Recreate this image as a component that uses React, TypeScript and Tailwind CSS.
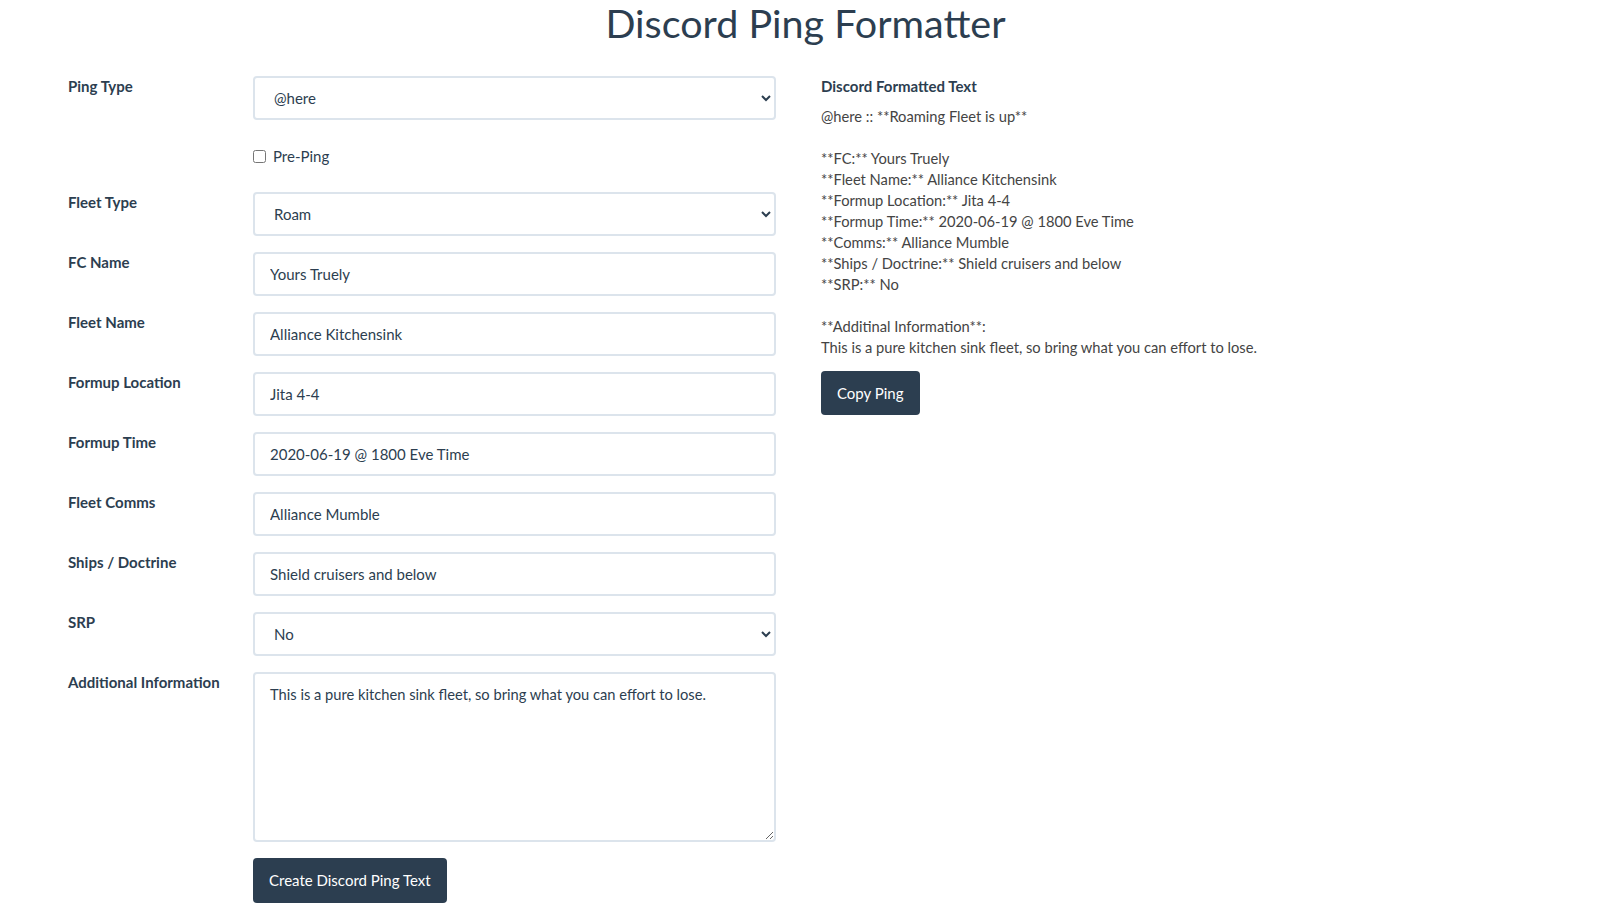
import React, { useState } from 'react';

const field =
  'w-full h-[44px] rounded-[4px] border-2 border-[#dce4ec] bg-white px-[15px] text-[15px] text-[#2c3e50] outline-none';

function Row({ label, children }: { label: string; children: React.ReactNode }) {
  return (
    <div className="flex items-start mb-[16px]">
      <label className="w-[185px] shrink-0 text-[15px] leading-[21px] font-bold text-[#2c3e50]">{label}</label>
      <div className="flex-1">{children}</div>
    </div>
  );
}

export default function App() {
  const [pingType, setPingType] = useState('@here');
  const [prePing, setPrePing] = useState(false);
  const [fleetType, setFleetType] = useState('Roam');
  const [fc, setFc] = useState('Yours Truely');
  const [fleetName, setFleetName] = useState('Alliance Kitchensink');
  const [location, setLocation] = useState('Jita 4-4');
  const [time, setTime] = useState('2020-06-19 @ 1800 Eve Time');
  const [comms, setComms] = useState('Alliance Mumble');
  const [ships, setShips] = useState('Shield cruisers and below');
  const [srp, setSrp] = useState('No');
  const [info, setInfo] = useState('This is a pure kitchen sink fleet, so bring what you can effort to lose.');

  const output = [
    `${pingType} :: **Roaming Fleet is up**`,
    '',
    `**FC:** ${fc}`,
    `**Fleet Name:** ${fleetName}`,
    `**Formup Location:** ${location}`,
    `**Formup Time:** ${time}`,
    `**Comms:** ${comms}`,
    `**Ships / Doctrine:** ${ships}`,
    `**SRP:** ${srp}`,
    '',
    '**Additinal Information**:',
    info,
  ];

  return (
    <div className="min-h-screen bg-white font-['Lato','Liberation_Sans',sans-serif] text-[#2c3e50]">
      <h1 className="text-center pl-[8px] text-[39.5px] leading-[46px] font-normal mb-[30px]">Discord Ping Formatter</h1>

      <div className="flex">
        {/* Form */}
        <div className="w-[801px] shrink-0 pl-[68px] pr-[25px]">
          <Row label="Ping Type">
            <select className={field + ' pl-[15px] pr-[4px]'} value={pingType} onChange={(e) => setPingType(e.target.value)}>
              <option>@here</option>
              <option>@everyone</option>
              <option>@fleet</option>
            </select>
          </Row>

          <div className="flex items-center h-[40px] mb-[16px] pl-[185px]">
            <input
              type="checkbox"
              checked={prePing}
              onChange={(e) => setPrePing(e.target.checked)}
              className="w-[13px] h-[13px] m-0"
            />
            <span className="ml-[7px] text-[15px] text-[#2c3e50]">Pre-Ping</span>
          </div>

          <Row label="Fleet Type">
            <select className={field + ' pl-[15px] pr-[4px]'} value={fleetType} onChange={(e) => setFleetType(e.target.value)}>
              <option>Roam</option>
              <option>Stratop</option>
              <option>CTA</option>
            </select>
          </Row>
          <Row label="FC Name">
            <input className={field} value={fc} onChange={(e) => setFc(e.target.value)} />
          </Row>
          <Row label="Fleet Name">
            <input className={field} value={fleetName} onChange={(e) => setFleetName(e.target.value)} />
          </Row>
          <Row label="Formup Location">
            <input className={field} value={location} onChange={(e) => setLocation(e.target.value)} />
          </Row>
          <Row label="Formup Time">
            <input className={field} value={time} onChange={(e) => setTime(e.target.value)} />
          </Row>
          <Row label="Fleet Comms">
            <input className={field} value={comms} onChange={(e) => setComms(e.target.value)} />
          </Row>
          <Row label="Ships / Doctrine">
            <input className={field} value={ships} onChange={(e) => setShips(e.target.value)} />
          </Row>
          <Row label="SRP">
            <select className={field + ' pl-[15px] pr-[4px]'} value={srp} onChange={(e) => setSrp(e.target.value)}>
              <option>No</option>
              <option>Yes</option>
            </select>
          </Row>
          <Row label="Additional Information">
            <textarea
              className="block w-full h-[170px] rounded-[4px] border-2 border-[#dce4ec] bg-white px-[15px] py-[10px] text-[14.7px] leading-[21px] text-[#2c3e50] outline-none"
              value={info}
              onChange={(e) => setInfo(e.target.value)}
            />
          </Row>
          <div className="pl-[185px]">
            <button className="h-[45px] px-[16px] rounded-[4px] bg-[#2c3e50] text-white text-[15px]">Create Discord Ping Text</button>
          </div>
        </div>

        {/* Output */}
        <div className="flex-1 pl-[20px]">
          <h5 className="text-[15px] leading-[21px] font-bold text-[#2c3e50] mb-[9px]">Discord Formatted Text</h5>
          <div className="text-[14.7px] leading-[21px] text-[#444] whitespace-pre-wrap">
            {output.map((l, i) => (
              <div key={i} className="min-h-[21px]">{l}</div>
            ))}
          </div>
          <button className="mt-[13px] h-[44px] px-[16px] rounded-[4px] bg-[#2c3e50] text-white text-[15px]">Copy Ping</button>
        </div>
      </div>
    </div>
  );
}
